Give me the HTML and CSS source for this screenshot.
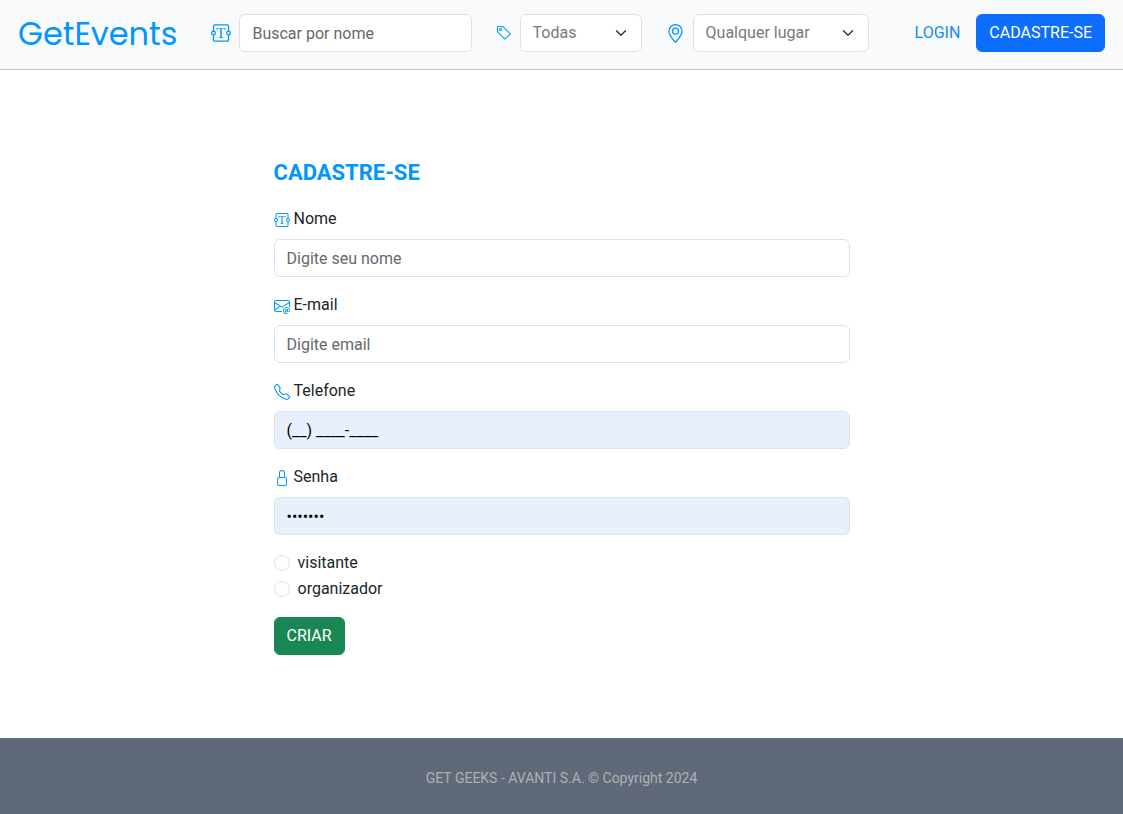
FILE: index.html
```html
<!DOCTYPE html>
<html lang="pt-BR">
<head>
<meta charset="utf-8">
<meta name="viewport" content="width=device-width, initial-scale=1">
<title>GetEvents</title>
<link rel="stylesheet" href="styles.css">
</head>
<body>
<svg class="sprite" aria-hidden="true">
  <symbol id="textarea-t" viewBox="0 0 16 16">
    <path d="M1.5 2.5A1.5 1.5 0 0 1 3 1h10a1.5 1.5 0 0 1 1.5 1.5v3.563a2 2 0 0 1 0 3.874V13.5A1.5 1.5 0 0 1 13 15H3a1.5 1.5 0 0 1-1.5-1.5V9.937a2 2 0 0 1 0-3.874zm1 3.563a2 2 0 0 1 0 3.874V13.5a.5.5 0 0 0 .5.5h10a.5.5 0 0 0 .5-.5V9.937a2 2 0 0 1 0-3.874V2.5A.5.5 0 0 0 13 2H3a.5.5 0 0 0-.5.5zM2 7a1 1 0 1 0 0 2 1 1 0 0 0 0-2m12 0a1 1 0 1 0 0 2 1 1 0 0 0 0-2"/>
    <path d="M11.434 4H4.566L4.5 5.994h.386c.21-1.252.612-1.446 2.173-1.495l.343-.011v6.343c0 .537-.116.665-1.049.748V12h3.294v-.421c-.938-.083-1.054-.21-1.054-.748V4.488l.348.01c1.56.05 1.963.244 2.173 1.496h.386z"/>
  </symbol>
  <symbol id="tag" viewBox="0 0 16 16">
    <path d="M6 4.5a1.5 1.5 0 1 1-3 0 1.5 1.5 0 0 1 3 0m-1 0a.5.5 0 1 0-1 0 .5.5 0 0 0 1 0"/>
    <path d="M2 1h4.586a1 1 0 0 1 .707.293l7 7a1 1 0 0 1 0 1.414l-4.586 4.586a1 1 0 0 1-1.414 0l-7-7A1 1 0 0 1 1 6.586V2a1 1 0 0 1 1-1m0 5.586 7 7L13.586 9l-7-7H2z"/>
  </symbol>
  <symbol id="geo" viewBox="0 0 16 16">
    <path d="M12.166 8.94c-.524 1.062-1.234 2.12-1.96 3.07A32 32 0 0 1 8 14.58a32 32 0 0 1-2.206-2.57c-.726-.95-1.436-2.008-1.96-3.07C3.304 7.867 3 6.862 3 6a5 5 0 0 1 10 0c0 .862-.305 1.867-.834 2.94M8 16s6-5.686 6-10A6 6 0 0 0 2 6c0 4.314 6 10 6 10"/>
    <path d="M8 8a2 2 0 1 1 0-4 2 2 0 0 1 0 4m0 1a3 3 0 1 0 0-6 3 3 0 0 0 0 6"/>
  </symbol>
  <symbol id="envelope-at" viewBox="0 0 16 16">
    <path d="M2 2a2 2 0 0 0-2 2v8.01A2 2 0 0 0 2 14h5.5a.5.5 0 0 0 0-1H2a1 1 0 0 1-.966-.741l5.64-3.471L8 9.583l7-4.2V8.5a.5.5 0 0 0 1 0V4a2 2 0 0 0-2-2zm3.708 6.208L1 11.105V5.383zM1 4.217V4a1 1 0 0 1 1-1h12a1 1 0 0 1 1 1v.217l-7 4.2z"/>
    <path d="M14.247 14.269c1.01 0 1.587-.857 1.587-2.025v-.21C15.834 10.43 14.64 9 12.52 9h-.035C10.42 9 9 10.36 9 12.432v.214C9 14.82 10.438 16 12.358 16h.044c.594 0 1.018-.074 1.237-.175v-.73c-.245.11-.673.18-1.18.18h-.044c-1.334 0-2.571-.788-2.571-2.655v-.157c0-1.657 1.058-2.724 2.64-2.724h.04c1.535 0 2.484 1.05 2.484 2.326v.118c0 .975-.324 1.39-.639 1.39-.232 0-.41-.148-.41-.42v-2.19h-.906v.569h-.03c-.084-.298-.368-.63-.954-.63-.778 0-1.259.555-1.259 1.4v.528c0 .892.49 1.434 1.26 1.434.471 0 .896-.227 1.014-.643h.043c.118.42.617.648 1.12.648m-2.453-1.588v-.227c0-.546.227-.791.573-.791.297 0 .572.192.572.708v.367c0 .573-.253.744-.564.744-.354 0-.581-.215-.581-.8Z"/>
  </symbol>
  <symbol id="telephone" viewBox="0 0 16 16">
    <path d="M3.654 1.328a.678.678 0 0 0-1.015-.063L1.605 2.3c-.483.484-.661 1.169-.45 1.77a17.6 17.6 0 0 0 4.168 6.608 17.6 17.6 0 0 0 6.608 4.168c.601.211 1.286.033 1.77-.45l1.034-1.034a.678.678 0 0 0-.063-1.015l-2.307-1.794a.68.68 0 0 0-.58-.122l-2.19.547a1.75 1.75 0 0 1-1.657-.459L5.482 8.062a1.75 1.75 0 0 1-.46-1.657l.548-2.19a.68.68 0 0 0-.122-.58zM1.884.511a1.745 1.745 0 0 1 2.612.163L6.29 2.98c.329.423.445.974.315 1.494l-.547 2.19a.68.68 0 0 0 .178.643l2.457 2.457a.68.68 0 0 0 .644.178l2.189-.547a1.75 1.75 0 0 1 1.494.315l2.306 1.794c.829.645.905 1.87.163 2.611l-1.034 1.034c-.74.74-1.846 1.065-2.877.702a18.6 18.6 0 0 1-7.01-4.42 18.6 18.6 0 0 1-4.42-7.009c-.362-1.03-.037-2.137.703-2.877z"/>
  </symbol>
  <symbol id="lock" viewBox="0 0 16 16">
    <path d="M8 1a2 2 0 0 1 2 2v4H6V3a2 2 0 0 1 2-2m3 6V3a3 3 0 0 0-6 0v4a2 2 0 0 0-2 2v5a2 2 0 0 0 2 2h6a2 2 0 0 0 2-2V9a2 2 0 0 0-2-2M5 8h6a1 1 0 0 1 1 1v5a1 1 0 0 1-1 1H5a1 1 0 0 1-1-1V9a1 1 0 0 1 1-1"/>
  </symbol>
</svg>

<header class="navbar">
  <a class="brand" href="#">GetEvents</a>
  <form class="filters">
    <div class="filter filter-name">
      <label for="busca" aria-label="Nome"><svg class="icon icon-lg"><use href="#textarea-t"/></svg></label>
      <input class="control" id="busca" type="text" placeholder="Buscar por nome">
    </div>
    <div class="filter">
      <label for="categoria" aria-label="Categoria"><svg class="icon"><use href="#tag"/></svg></label>
      <select class="control select select-category" id="categoria"><option>Todas</option></select>
    </div>
    <div class="filter">
      <label for="lugar" aria-label="Lugar"><svg class="icon icon-md"><use href="#geo"/></svg></label>
      <select class="control select select-place" id="lugar"><option>Qualquer lugar</option></select>
    </div>
  </form>
  <nav class="account">
    <a class="login" href="#">LOGIN</a>
    <a class="btn btn-primary" href="#">CADASTRE-SE</a>
  </nav>
</header>

<main class="content">
  <form class="signup">
    <h1 class="title">CADASTRE-SE</h1>
    <div class="field">
      <label class="label" for="nome"><svg class="icon"><use href="#textarea-t"/></svg>Nome</label>
      <input class="control" id="nome" type="text" placeholder="Digite seu nome">
    </div>
    <div class="field">
      <label class="label" for="email"><svg class="icon"><use href="#envelope-at"/></svg>E-mail</label>
      <input class="control" id="email" type="email" placeholder="Digite email">
    </div>
    <div class="field">
      <label class="label" for="telefone"><svg class="icon"><use href="#telephone"/></svg>Telefone</label>
      <input class="control filled" id="telefone" type="tel" value="(__) ____-____">
    </div>
    <div class="field">
      <label class="label" for="senha"><svg class="icon"><use href="#lock"/></svg>Senha</label>
      <input class="control filled" id="senha" type="password" value="eventos">
    </div>
    <div class="roles">
      <label class="role"><input class="radio" type="radio" name="perfil">visitante</label>
      <label class="role"><input class="radio" type="radio" name="perfil">organizador</label>
    </div>
    <button class="btn btn-success" type="button">CRIAR</button>
  </form>
</main>

<footer class="footer">GET GEEKS - AVANTI S.A. © Copyright 2024</footer>
</body>
</html>
```
FILE: styles.css
```css
*, *::before, *::after { box-sizing: border-box; }

body {
  margin: 0;
  min-height: 100vh;
  display: flex;
  flex-direction: column;
  background: #fff;
  color: #212529;
  font-family: Roboto, "Liberation Sans", sans-serif;
  font-size: 16px;
  line-height: 24px;
}

.sprite { display: none; }

.icon {
  display: block;
  flex: none;
  width: 16px;
  height: 16px;
  fill: #0195ff;
}
.icon-md { width: 19px; height: 19px; }
.icon-lg { width: 20px; height: 20px; }

.navbar {
  display: flex;
  align-items: center;
  padding: 14px 18px 17px;
  background: #f8fafc;
  border-bottom: 1px solid #bbbec5;
}

.brand {
  padding-top: 2px;
  color: #0195ff;
  font-family: Poppins, Inter, sans-serif;
  font-size: 32px;
  font-weight: 400;
  line-height: 36px;
  text-decoration: none;
}

.filters {
  flex: 1;
  display: flex;
  gap: 24px;
  margin: 0 46px 0 34px;
}

.filter {
  display: flex;
  align-items: center;
  gap: 8px;
}
.filter-name { flex: 1; }

.control {
  width: 100%;
  min-width: 0;
  height: 38px;
  padding: 6px 12px;
  border: 1px solid #dee2e6;
  border-radius: 6px;
  background-color: #fff;
  color: #212529;
  font: inherit;
}
.control::placeholder { color: #65686b; opacity: 1; }

.select {
  appearance: none;
  color: #777a7d;
  background-image: url("data:image/svg+xml,%3Csvg xmlns='http://www.w3.org/2000/svg' viewBox='0 0 16 16'%3E%3Cpath fill='none' stroke='%23343a40' stroke-linecap='round' stroke-linejoin='round' stroke-width='2' d='m2 5 6 6 6-6'/%3E%3C/svg%3E");
  background-repeat: no-repeat;
  background-position: right 14px center;
  background-size: 12px 12px;
}
.select-category { width: 122px; }
.select-place { width: 176px; }

.account {
  display: flex;
  align-items: center;
  gap: 16px;
}
.login { color: #0d8bfd; text-decoration: none; }

.btn {
  padding: 6px 12px;
  border: 1px solid transparent;
  border-radius: 6px;
  color: #fff;
  font: inherit;
  text-decoration: none;
  cursor: pointer;
}
.btn-primary { background: #0d6efd; border-color: #0d6efd; }
.btn-success { background: #198754; border-color: #198754; }

.content {
  flex: 1;
  padding: 89px 24px 80px;
}

.signup {
  max-width: 576px;
  margin: 0 auto;
}

.title {
  margin: 0 0 20px;
  color: #0195ff;
  font-size: 22px;
  font-weight: 700;
  line-height: 28px;
}

.field { margin-bottom: 16px; }

.label {
  display: flex;
  align-items: center;
  gap: 4px;
  margin-bottom: 8px;
}
.label .icon { margin-top: 2px; }

.filled { background-color: #e8f0fe; color: #000; }

.roles { margin-bottom: 16px; }
.role {
  display: flex;
  align-items: center;
  gap: 8px;
  width: fit-content;
  margin-bottom: 2px;
}
.radio {
  appearance: none;
  width: 16px;
  height: 16px;
  margin: 0;
  border: 1px solid #dee2e6;
  border-radius: 50%;
  background: #fff;
}
.radio:checked { border: 5px solid #0d6efd; }

.footer {
  padding: 28px 24px 24px;
  background: #5f697a;
  color: #b0b0b0;
  font-size: 14px;
  text-align: center;
}
```
